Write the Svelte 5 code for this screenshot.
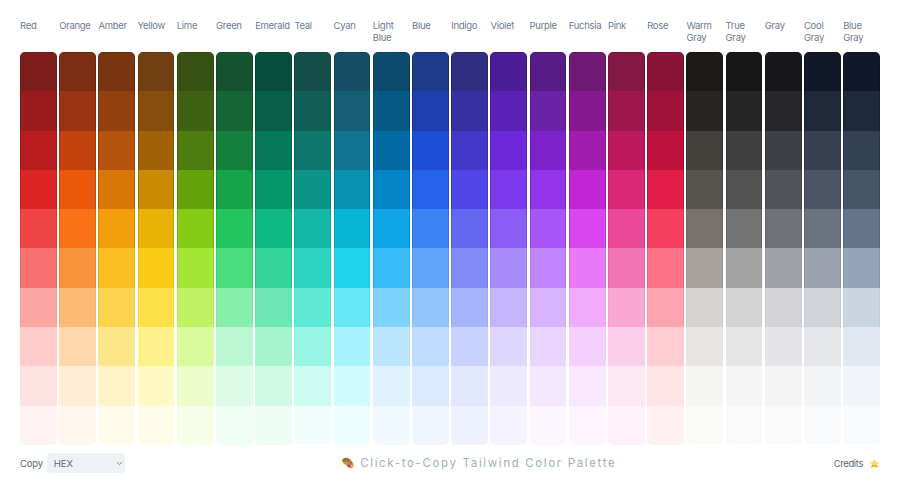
<script>
  const shades = [
    ['Red', '7f1d1d 991b1b b91c1c dc2626 ef4444 f87171 fca5a5 fecaca fee2e2 fef2f2'],
    ['Orange', '7c2d12 9a3412 c2410c ea580c f97316 fb923c fdba74 fed7aa ffedd5 fff7ed'],
    ['Amber', '78350f 92400e b45309 d97706 f59e0b fbbf24 fcd34d fde68a fef3c7 fffbeb'],
    ['Yellow', '713f12 854d0e a16207 ca8a04 eab308 facc15 fde047 fef08a fef9c3 fefce8'],
    ['Lime', '365314 3f6212 4d7c0f 65a30d 84cc16 a3e635 bef264 d9f99d ecfccb f7fee7'],
    ['Green', '14532d 166534 15803d 16a34a 22c55e 4ade80 86efac bbf7d0 dcfce7 f0fdf4'],
    ['Emerald', '064e3b 065f46 047857 059669 10b981 34d399 6ee7b7 a7f3d0 d1fae5 ecfdf5'],
    ['Teal', '134e4a 115e59 0f766e 0d9488 14b8a6 2dd4bf 5eead4 99f6e4 ccfbf1 f0fdfa'],
    ['Cyan', '164e63 155e75 0e7490 0891b2 06b6d4 22d3ee 67e8f9 a5f3fc cffafe ecfeff'],
    ['Light Blue', '0c4a6e 075985 0369a1 0284c7 0ea5e9 38bdf8 7dd3fc bae6fd e0f2fe f0f9ff'],
    ['Blue', '1e3a8a 1e40af 1d4ed8 2563eb 3b82f6 60a5fa 93c5fd bfdbfe dbeafe eff6ff'],
    ['Indigo', '312e81 3730a3 4338ca 4f46e5 6366f1 818cf8 a5b4fc c7d2fe e0e7ff eef2ff'],
    ['Violet', '4c1d95 5b21b6 6d28d9 7c3aed 8b5cf6 a78bfa c4b5fd ddd6fe ede9fe f5f3ff'],
    ['Purple', '581c87 6b21a8 7e22ce 9333ea a855f7 c084fc d8b4fe e9d5ff f3e8ff faf5ff'],
    ['Fuchsia', '701a75 86198f a21caf c026d3 d946ef e879f9 f0abfc f5d0fe fae8ff fdf4ff'],
    ['Pink', '831843 9d174d be185d db2777 ec4899 f472b6 f9a8d4 fbcfe8 fce7f3 fdf2f8'],
    ['Rose', '881337 9f1239 be123c e11d48 f43f5e fb7185 fda4af fecdd3 ffe4e6 fff1f2'],
    ['Warm Gray', '1c1917 292524 44403c 57534e 78716c a8a29e d6d3d1 e7e5e4 f5f5f4 fafaf9'],
    ['True Gray', '171717 262626 404040 525252 737373 a3a3a3 d4d4d4 e5e5e5 f5f5f5 fafafa'],
    ['Gray', '18181b 27272a 3f3f46 52525b 71717a a1a1aa d4d4d8 e4e4e7 f4f4f5 fafafa'],
    ['Cool Gray', '111827 1f2937 374151 4b5563 6b7280 9ca3af d1d5db e5e7eb f3f4f6 f9fafb'],
    ['Blue Gray', '0f172a 1e293b 334155 475569 64748b 94a3b8 cbd5e1 e2e8f0 f1f5f9 f8fafc']
  ].map(([name, list]) => ({ name, colors: list.split(' ') }));

  let format = $state('HEX');
</script>

<div class="page">
  <div class="palette">
    {#each shades as shade}
      <div class="column">
        <div class="name">{shade.name}</div>
        <div class="swatches">
          {#each shade.colors as color}
            <button class="swatch" aria-label={`${shade.name} #${color}`} style={`background:#${color}`}></button>
          {/each}
        </div>
      </div>
    {/each}
  </div>

  <footer>
    <label class="copy">
      <span>Copy</span>
      <span class="select-wrap">
        <select bind:value={format}>
          <option>HEX</option>
          <option>RGB</option>
          <option>HSL</option>
        </select>
        <svg class="chevron" viewBox="0 0 10 6" aria-hidden="true">
          <path d="M1.5 1.2 5 4.6l3.5-3.4" fill="none" stroke="#64748b" stroke-width="1.2" />
        </svg>
      </span>
    </label>

    <div class="title">
      <svg class="palette-icon" viewBox="0 0 24 24" aria-hidden="true">
        <path d="M2.500 3.500C6.500-.5 13 1.500 17.500 6c3.500 3.500 6.500 8.500 5.500 12.500-.8 3.300-4.500 4.700-8 3.500-3.200-1.100-4.500-4-7-6C5.500 14.500 1.500 13 .7 9 .3 7 1 5 2.500 3.500Z" fill="#e08f2e" />
        <path d="M2.500 3.500C6.500-.5 13 1.500 17.500 6c-3 0-5.500-.5-8.500.5C6 7.500 3 8.500.8 8.500.5 6.700 1 5 2.500 3.500Z" fill="#b06a1c" />
        <circle cx="6.500" cy="7" r="2.400" fill="#3f9a3c" />
        <circle cx="12" cy="8" r="2.400" fill="#2a7fd0" />
        <circle cx="17.500" cy="11.500" r="2.400" fill="#e0462c" />
        <circle cx="14" cy="17.500" r="2.800" fill="#8e3fc4" />
        <circle cx="19.500" cy="18" r="2" fill="#e8c01f" />
      </svg>
      <span>Click-to-Copy Tailwind Color Palette</span>
    </div>

    <div class="credits">
      <span>Credits</span>
      <svg class="star" viewBox="0 0 24 24" aria-hidden="true">
        <path d="M12 1l3.300 7.200 7.700.9-5.700 5.300 1.600 7.600-6.900-3.900-6.900 3.900 1.600-7.600L1 9.100l7.700-.9Z" fill="#fcd980" />
        <path d="M5.800 15.500c3.800 1.200 8.600 1.200 12.400 0l.7 6.500-6.900-3.900L5.100 22Z" fill="#f5a300" />
      </svg>
    </div>
  </footer>
</div>

<style>
  :global(body) {
    margin: 0;
    background: #fff;
  }

  .page {
    box-sizing: border-box;
    height: 493px;
    padding: 20px;
    display: flex;
    flex-direction: column;
    gap: 8px;
    font-family: Inter, "Open Sans", sans-serif;
  }

  .palette {
    flex: 1;
    min-height: 0;
    display: grid;
    grid-template-columns: repeat(22, 1fr);
    column-gap: 2.400px;
  }

  .column {
    display: flex;
    flex-direction: column;
    min-width: 0;
  }

  .name {
    height: 32px;
    font-size: 9.500px;
    letter-spacing: -0.300px;
    line-height: 11.500px;
    color: #6b7a90;
  }

  .swatches {
    flex: 1;
    display: flex;
    flex-direction: column;
    border-radius: 5px;
    overflow: hidden;
  }

  .swatch {
    flex: 1;
    display: block;
    width: 100%;
    padding: 0;
    border: 0;
    cursor: pointer;
    --edge: 0;
    box-shadow: inset 1px 0 rgba(0, 0, 0, var(--edge)), inset -1px 0 rgba(0, 0, 0, var(--edge));
  }

  .swatch:nth-child(-n + 4) {
    --edge: 0.16;
  }

  .swatch:nth-child(5) {
    --edge: 0.12;
  }

  .swatch:nth-child(6) {
    --edge: 0.08;
  }

  .swatch:nth-child(7) {
    --edge: 0.04;
  }

  .swatch:first-child {
    box-shadow: inset 1px 0 rgba(0, 0, 0, var(--edge)), inset -1px 0 rgba(0, 0, 0, var(--edge)), inset 0 1px rgba(0, 0, 0, var(--edge));
  }

  footer {
    height: 20px;
    display: flex;
    align-items: center;
    justify-content: space-between;
    font-size: 9.500px;
    letter-spacing: -0.200px;
    color: #5b6676;
  }

  .copy {
    display: flex;
    align-items: center;
    gap: 4px;
  }

  .select-wrap {
    position: relative;
    display: block;
    width: 78px;
    height: 20px;
  }

  select {
    appearance: none;
    box-sizing: border-box;
    width: 100%;
    height: 100%;
    padding: 0 7px;
    border: 0;
    border-radius: 3px;
    background: #eef2f6;
    color: #5b6676;
    font: inherit;
  }

  .chevron {
    position: absolute;
    right: 2px;
    top: 7.500px;
    width: 7px;
    height: 5px;
    pointer-events: none;
  }

  .title {
    display: flex;
    align-items: center;
    gap: 6px;
    font-size: 11.500px;
    letter-spacing: 1.650px;
    color: #a0adc0;
  }

  .palette-icon {
    width: 12px;
    height: 12px;
  }

  .credits {
    display: flex;
    align-items: center;
    justify-content: flex-end;
    gap: 6px;
    letter-spacing: -0.400px;
  }

  .star {
    width: 11px;
    height: 11px;
  }
</style>
